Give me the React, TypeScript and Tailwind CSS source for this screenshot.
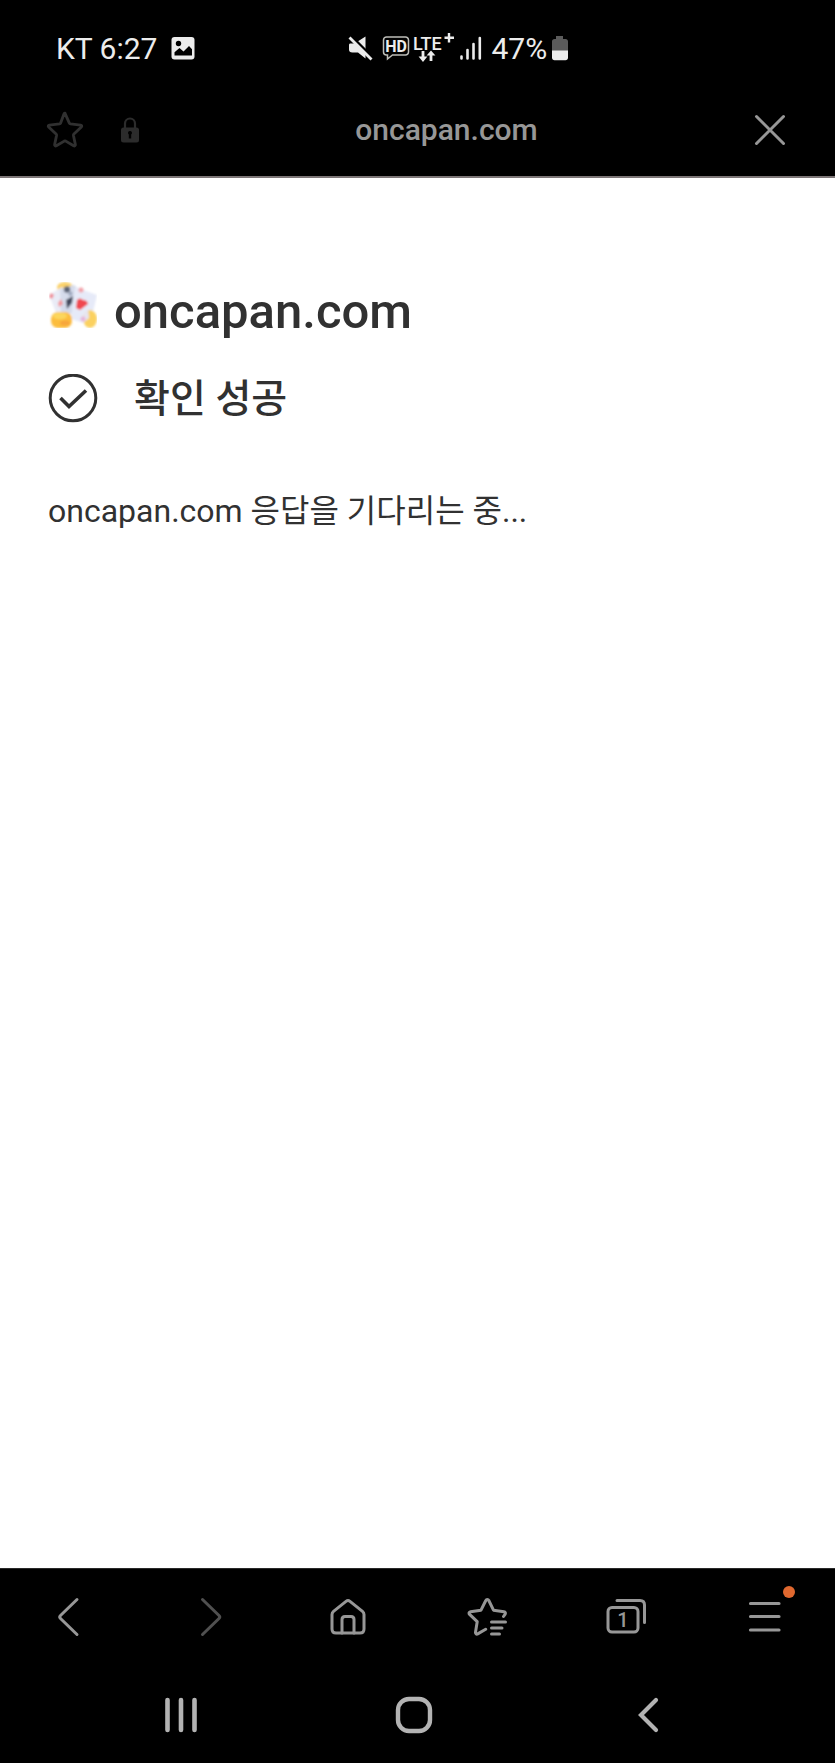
import type { ReactNode } from 'react';

const SITE = 'oncapan.com';

const STAR = 'M19 2.5l4.6 10.2c.3.6.6.8 1.2.9l10.6 1.2c1.2.2 1.6 1.3.8 2.1l-7.8 7.4c-.5.5-.6.9-.5 1.5l2 9.4c.2 1.2-.8 1.9-1.8 1.4l-8.3-4.9c-.6-.3-1-.3-1.6 0l-8.3 4.9c-1 .5-2-.2-1.8-1.4l2-9.4c.1-.6 0-1-.5-1.5L1.8 16.9c-.8-.8-.4-1.9.8-2.1l10.6-1.2c.6-.1.9-.3 1.2-.9L17.9 3.2c.4-.9 1-1.2 1.1-.7z';

export default function App() {
  return (
    <div className="flex min-h-screen flex-col bg-white font-['Roboto','Noto_Sans_CJK_KR',sans-serif]">
      <header className="border-b-2 border-[#7d7677] bg-black">
        <StatusBar />
        <AddressBar />
      </header>
      <main className="flex-1 px-12 pt-[99px] text-[#313131]">
        <div className="flex gap-4">
          <Favicon />
          <h1 className="text-[49px] leading-[70px] font-medium">{SITE}</h1>
        </div>
        <div className="mt-6 flex items-center gap-9">
          <svg width="50" height="50" viewBox="0 1 50 50" fill="none" stroke="currentColor" strokeWidth="3">
            <circle cx="25" cy="25" r="22.8" />
            <path d="M12.5 25l8.5 8.5L38 17.5" strokeWidth="3.6" />
          </svg>
          <h2 className="text-[39px] leading-[56px] font-medium">확인 성공</h2>
        </div>
        <p className="mt-[60px] text-[32px] leading-[48px]">{SITE} 응답을 기다리는 중...</p>
      </main>
      <BrowserNav />
      <SystemNav />
    </div>
  );
}

function StatusBar() {
  return (
    <div className="flex h-24 items-center pl-14 text-[30px] text-[#ececec]">
      <span>KT 6:27</span>
      <svg className="ml-[14px]" width="24" height="24" viewBox="0 0 24 24">
        <rect x="0.5" y="1" width="23" height="22.5" rx="3" fill="#ececec" />
        <circle cx="7.5" cy="7.5" r="2.7" fill="#000" />
        <path d="M3.5 19.5v-3.2l5-4.3 4 3.5 5.5-5.5 3 3.2v6.3z" fill="#000" />
      </svg>
      <div className="ml-[153px] flex items-center">
        <svg width="26" height="26" viewBox="0 0 26 26" fill="#ececec">
          <path d="M2 8.5h4.5L17.5 1.5v22L10 17.5H4.5C2 17.5 1 16.5 1 14.5v-4c0-1.2.3-2 1-2z" />
          <path d="M2 0L25 23" stroke="#000" strokeWidth="3" />
          <path d="M1.5 2.5L23.5 24.5" stroke="#ececec" strokeWidth="2.8" />
        </svg>
        <svg className="ml-2" width="28" height="26" viewBox="0 0 28 26">
          <path
            d="M4.5 2h19a3 3 0 0 1 3 3v12a3 3 0 0 1-3 3H10.5l-5 4v-4h-1a3 3 0 0 1-3-3V5a3 3 0 0 1 3-3z"
            fill="none"
            stroke="#bdbdb8"
            strokeWidth="1.5"
          />
          <text x="14" y="17" textAnchor="middle" fontSize="16" fontWeight="700" fill="#ececec">HD</text>
        </svg>
        <svg className="ml-px" width="44" height="36" viewBox="-1 -3 44 36" fill="#ececec">
          <text x="1" y="17" fontSize="18" fontWeight="500">LTE</text>
          <path d="M37 0v9.5M32.5 4.7H42" stroke="#ececec" strokeWidth="2.4" />
          <path d="M9.6 18h2.8v5.5h3L11 29l-4.4-5.5h3zM17.6 28h2.8v-5.5h3L19 17.5l-4.4 5h3z" />
        </svg>
        <svg className="ml-1" width="24" height="26" viewBox="0 0 24 26" stroke="#ececec" strokeWidth="2.6" strokeLinecap="round">
          <path d="M2.5 21.5v2M8.5 15v8.5M14.5 9v14.5M20.8 3v20.5" />
        </svg>
        <span className="ml-2">47%</span>
        <svg className="ml-1" width="18" height="26" viewBox="0 0 18 26">
          <path d="M5 1h7v3h2.5c1.5 0 2.5 1 2.5 2.5V16H1V6.5C1 5 2 4 3.5 4H5z" fill="#5b5b5b" />
          <path d="M1 15.5h16v7c0 1.7-1 2.7-2.5 2.7h-11C2 25.2 1 24.2 1 22.5z" fill="#ececec" />
        </svg>
      </div>
    </div>
  );
}

function AddressBar() {
  return (
    <div className="flex h-20 items-center pr-12 pb-3 pl-[46px]">
      <button aria-label="Bookmark">
        <svg width="38" height="38" viewBox="-1 0 40 40" fill="none" stroke="#303030" strokeWidth="3" strokeLinejoin="round">
          <path d={STAR} />
        </svg>
      </button>
      <svg className="ml-9" width="20" height="28" viewBox="0 0 20 28">
        <path d="M5 13V7.5a5 5 0 0 1 10 0V13" fill="none" stroke="#2c2c2c" strokeWidth="2.2" />
        <rect x="1" y="11.5" width="18" height="15" rx="2.5" fill="#2c2c2c" />
        <path d="M10 15a2 2 0 0 1 1.2 3.6V22.5H8.8V18.6A2 2 0 0 1 10 15z" fill="#000" />
      </svg>
      <span className="flex-1 text-center text-[30px] leading-10 font-medium text-[#979797]">{SITE}</span>
      <button aria-label="Close">
        <svg width="34" height="34" viewBox="0 0 34 34" stroke="#979797" strokeWidth="3" strokeLinecap="round">
          <path d="M3.5 3.5l27 27M30.5 3.5l-27 27" />
        </svg>
      </button>
    </div>
  );
}

function Favicon() {
  return (
    <svg className="mt-1" width="50" height="48" viewBox="0 0 50 48">
      <defs>
        <filter id="soft" x="0" y="0" width="1" height="1">
          <feGaussianBlur stdDeviation="1.3" />
        </filter>
      </defs>
      <g filter="url(#soft)">
        <ellipse cx="17" cy="6.5" rx="8" ry="5.5" fill="#fbd26a" />
        <path d="M1 14l13-8 10 26-15 2z" fill="#e9ebf6" />
        <path d="M12 8l14-4 6 5-5 24-14-1z" fill="#d5dbeb" />
        <path d="M27 6l22 8-7 30-19-6z" fill="#e6eaf8" />
        <path d="M3 12l3 2-2 4-3-2z" fill="#f08a94" />
        <path d="M13 18l2 5-4 3-1-4z" fill="#f4979b" />
        <circle cx="19" cy="8.5" r="3.2" fill="#5d6577" />
        <path d="M25 15l-1 7-5 6-1-9z" fill="#3f475c" />
        <path d="M22 10l3 2-2 3-3-1z" fill="#9aa5bb" />
        <path d="M29 19c2-2 4-2 6 0 3 0 5 2 5 4l-8 6-4-2z" fill="#f0474f" />
        <circle cx="33" cy="9" r="2.5" fill="#f3a0a7" />
        <ellipse cx="42" cy="38" rx="7" ry="9" fill="#fbd161" />
        <path d="M36 33l4-5 1 9-6 5z" fill="#e6e5f3" />
        <circle cx="35" cy="38" r="2.5" fill="#e6b5dc" />
        <rect x="3" y="31" width="21" height="16" rx="7" fill="#fcbd3d" />
        <ellipse cx="12" cy="35" rx="7" ry="3.5" fill="#fcd65b" />
        <ellipse cx="17" cy="42" rx="5" ry="2.5" fill="#f7a53c" />
      </g>
    </svg>
  );
}

function NavButton({ label, children }: { label: string; children: ReactNode }) {
  return (
    <button aria-label={label} className="relative flex items-center justify-center">
      <svg width="40" height="40" viewBox="0 0 40 40" fill="none" stroke="currentColor" strokeWidth="3" strokeLinecap="round" strokeLinejoin="round">
        {children}
      </svg>
      {label === 'Menu' && <span className="absolute top-[17px] left-1/2 ml-[18px] size-3 rounded-full bg-[#e0682f]" />}
    </button>
  );
}

function BrowserNav() {
  return (
    <nav className="grid h-[99px] grid-cols-6 border-t border-[#292929] bg-black pb-[2px] text-[#979797]">
      <NavButton label="Back">
        <path d="M27 2.5L10.5 18.5q-1.5 1.5 0 3L27 37.5" />
      </NavButton>
      <NavButton label="Forward">
        <path d="M13.5 2.5L30 18.5q1.5 1.5 0 3L13.5 37.5" stroke="#505050" />
      </NavButton>
      <NavButton label="Home">
        <path d="M4 17.5q0-2 1.5-3.2L18 4.3q2-1.6 4 0l12.5 10q1.5 1.2 1.5 3.2V32q0 4-4 4H8q-4 0-4-4z" />
        <path d="M14 36V22.5q0-3 3-3h6q3 0 3 3V36" />
      </NavButton>
      <NavButton label="Bookmarks">
        <path d="M36.5 19.5l1.5-2.2c.8-1.2.3-2.3-1-2.5l-10.5-1.6L21.8 3.5c-.7-1.5-2.3-1.5-3 0L14 13.2 3.5 14.8c-1.5.2-1.9 1.6-.9 2.6l7.6 7.3L8.5 35.2c-.2 1.5.9 2.4 2.2 1.7l8-4.7" />
        <path d="M24.5 25h14M24.5 31H35M24.5 37h8" />
      </NavButton>
      <NavButton label="Tabs">
        <rect x="2" y="10.5" width="30" height="24.5" rx="4" />
        <path d="M11 3.5h23q4.5 0 4.5 4.5v17.5" />
        <text x="17" y="29.5" textAnchor="middle" fontSize="20" fontWeight="500" fill="currentColor" stroke="none">1</text>
      </NavButton>
      <NavButton label="Menu">
        <path d="M5.5 6.5h28.5M5.5 19.5h28.5M5.5 33h28.5" strokeWidth="3.2" />
      </NavButton>
    </nav>
  );
}

function SystemNav() {
  return (
    <nav className="grid h-24 grid-cols-3 bg-black pr-[70px] pl-16 text-[#b3b3b3]">
      <button aria-label="Recent apps" className="flex items-center justify-center">
        <svg width="36" height="40" viewBox="0 0 36 40" stroke="currentColor" strokeWidth="4.6" strokeLinecap="round">
          <path d="M4.5 5v30M18 5v30M31.5 5v30" />
        </svg>
      </button>
      <button aria-label="Home screen" className="flex items-center justify-center">
        <svg width="40" height="40" viewBox="0 0 40 40" fill="none" stroke="currentColor" strokeWidth="4.4">
          <rect x="4" y="4" width="32" height="32" rx="11" />
        </svg>
      </button>
      <button aria-label="Go back" className="flex items-center justify-center">
        <svg width="24" height="40" viewBox="0 0 24 40" fill="none" stroke="currentColor" strokeWidth="4.2" strokeLinecap="round">
          <path d="M20 5L5 20l15 15" />
        </svg>
      </button>
    </nav>
  );
}
